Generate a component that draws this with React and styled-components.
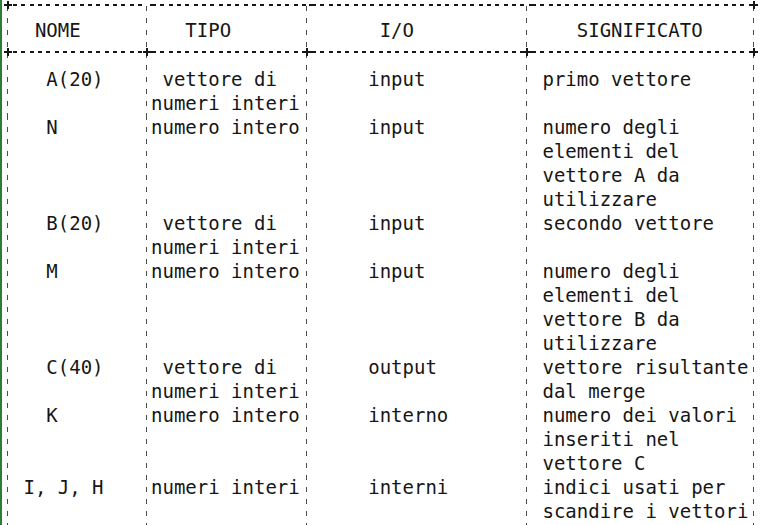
import React from 'react';
import styled, { createGlobalStyle, css } from 'styled-components';

const GlobalStyle = createGlobalStyle`
  html, body { margin: 0; padding: 0; background: #ffffff; }
  body { font-family: "DejaVu Sans Mono", "Liberation Mono", monospace; }
`;

const INK = '#161616';
const LINE = '#4a4a4a';

const vdash = `repeating-linear-gradient(to bottom, ${LINE} 0 5px, transparent 5px 12px)`;

const Page = styled.div`
  width: 765px;
  height: 525px;
  overflow: hidden;
  box-sizing: border-box;
  border-left: 2px solid #2f7d32;
  padding: 4px 0 0 5px;
`;

const Table = styled.div`
  display: grid;
  grid-template-columns: 139px 160px 220px 228px;
  grid-template-rows: 2px auto 2px repeat(6, auto) 1fr;
  height: 521px;
  font-size: 19px;
  line-height: 24px;
  color: ${INK};
`;

const crossShape = css`
  content: '';
  position: absolute;
  top: -3px;
  width: 8px;
  height: 8px;
  background:
    linear-gradient(${INK}, ${INK}) center / 100% 2px no-repeat,
    linear-gradient(${INK}, ${INK}) center / 2px 100% no-repeat;
`;

const RuleSeg = styled.div`
  position: relative;
  height: 2px;
  background: repeating-linear-gradient(to right, ${INK} 0 4px, transparent 4px 8.33px);
  background-position: 6px 0;
  ${(p) => p.$start && css`&::before { ${crossShape} left: -3px; }`}
  ${(p) => p.$end && css`&::after { ${crossShape} right: -4px; }`}
`;

const lines = css`
  background: ${vdash} left top / 1px 100% no-repeat;
  ${(p) =>
    p.$last &&
    css`
      background:
        ${vdash} left top / 1px 100% no-repeat,
        ${vdash} right top / 1px 100% no-repeat;
    `}
`;

const HeadCell = styled.div`
  padding: 11.5px 0 9.5px 5px;
  white-space: pre;
  ${lines}
`;

const BodyCell = styled.div`
  padding: ${(p) => (p.$first ? '14px' : '0')} 0 0 5px;
  white-space: pre;
  ${lines}
`;

const headers = ['  NOME', '   TIPO', '      I/O', '    SIGNIFICATO'];

const rows = [
  ['   A(20)', ' vettore di\nnumeri interi', '     input', ' primo vettore'],
  ['   N', 'numero intero', '     input', ' numero degli\n elementi del\n vettore A da\n utilizzare'],
  ['   B(20)', ' vettore di\nnumeri interi', '     input', ' secondo vettore'],
  ['   M', 'numero intero', '     input', ' numero degli\n elementi del\n vettore B da\n utilizzare'],
  ['   C(40)', ' vettore di\nnumeri interi', '     output', ' vettore risultante\n dal merge'],
  ['   K', 'numero intero', '     interno', ' numero dei valori\n inseriti nel\n vettore C'],
  [' I, J, H', 'numeri interi', '     interni', ' indici usati per\n scandire i vettori'],
];

export default function App() {
  return (
    <>
      <GlobalStyle />
      <Page>
        <Table>
          {[0, 1, 2, 3].map((i) => (
            <RuleSeg key={`t${i}`} $start={i === 0} $end={i === 3} />
          ))}
          {headers.map((h, i) => (
            <HeadCell key={`h${i}`} $last={i === 3}>
              {h}
            </HeadCell>
          ))}
          {[0, 1, 2, 3].map((i) => (
            <RuleSeg key={`m${i}`} $start $end={i === 3} />
          ))}
          {rows.map((r, ri) =>
            r.map((c, ci) => (
              <BodyCell key={`${ri}-${ci}`} $first={ri === 0} $last={ci === 3}>
                {c}
              </BodyCell>
            ))
          )}
        </Table>
      </Page>
    </>
  );
}
